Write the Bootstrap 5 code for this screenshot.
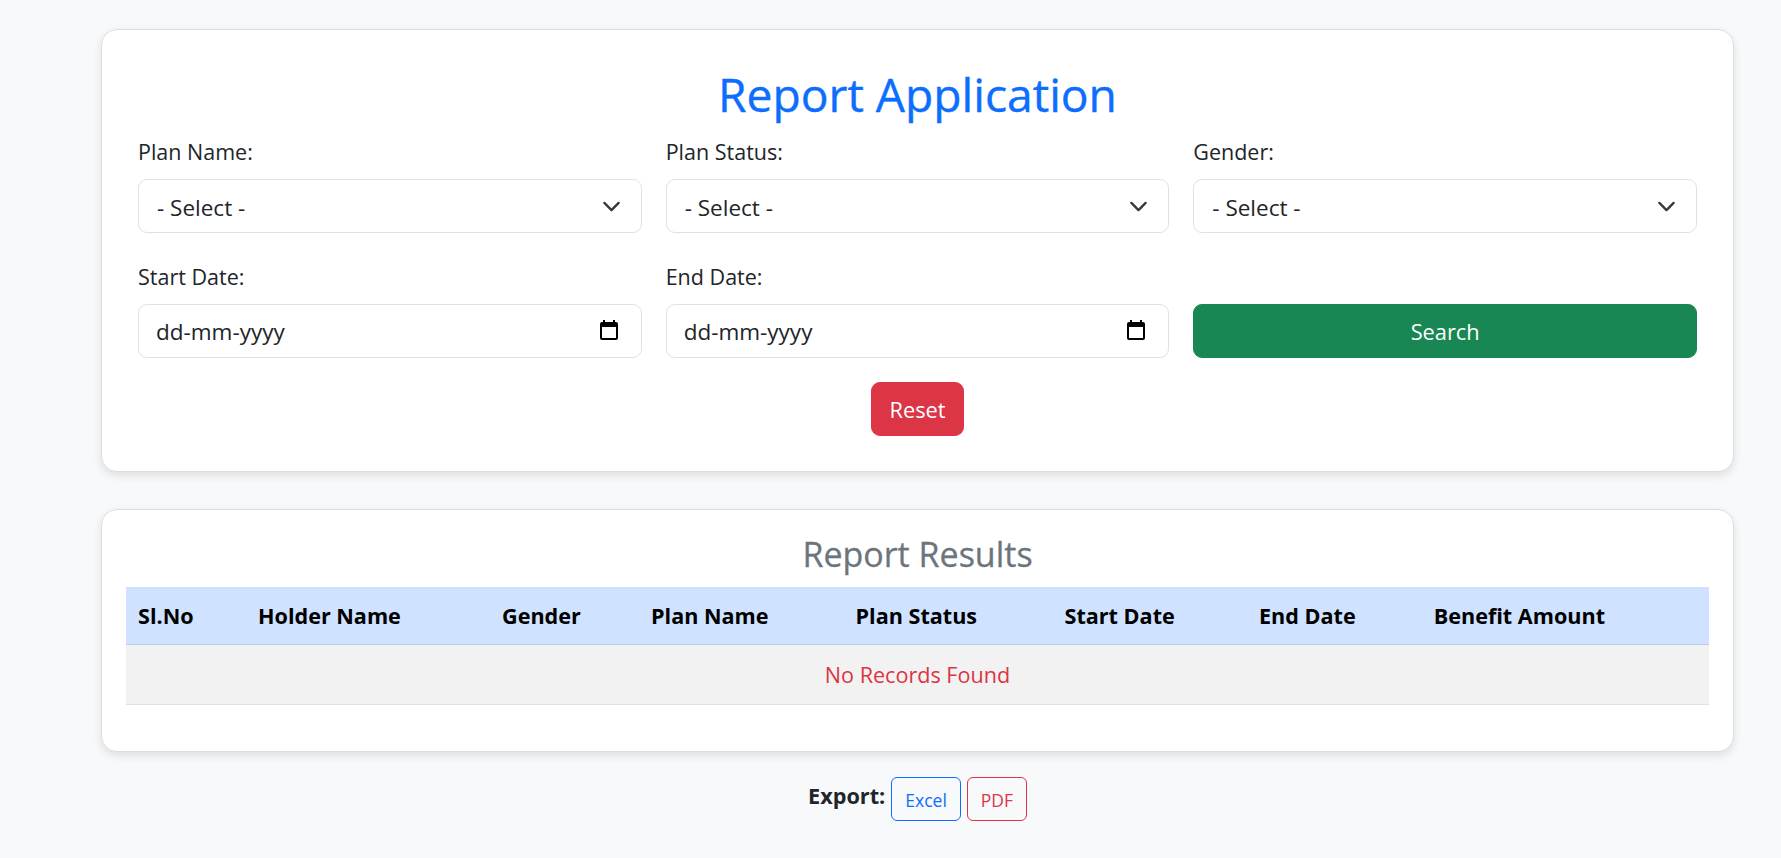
<!DOCTYPE html>
<html lang="en">
<head>
  <meta charset="UTF-8">
  <meta name="viewport" content="width=device-width, initial-scale=1.0">
  <title>Report Application</title>
  <link href="https://cdn.jsdelivr.net/npm/bootstrap@5.3.0/dist/css/bootstrap.min.css" rel="stylesheet">
  <style>
    body { background-color: #f8f9fa; font-family: "Open Sans", "Noto Sans", sans-serif; color: #212529; }
    .page-wrap { padding: 29px 47px 0 101px; }
    .panel { background: #fff; border: 1px solid #dcdee0; border-radius: 16px; box-shadow: 0 4px 10px rgba(0,0,0,.1); }
    .panel-form { padding: 35px 36px 30px 36px; height: 443px; }
    .panel-results { padding: 21px 24px 0; height: 243px; margin-top: 37px; }
    .page-title { font-size: 46.2px; line-height: 60px; color: #0d6efd; text-align: center; margin-bottom: 12px; -webkit-text-stroke: .4px #0d6efd; }
    .sub-title { font-size: 34px; line-height: 46px; color: #6c757d; text-align: center; margin-bottom: 10px; -webkit-text-stroke: .3px #6c757d; }
    .field-label { font-size: 21.5px; line-height: 30px; margin-bottom: 12px; display: block; }
    .form-select, .form-control { height: 54px; font-size: 22.5px; border-radius: 9px; border-color: #dee2e6; color: #212529; }
    .form-select { padding-left: 18px; padding-top: 10px; background-size: 19px 19px; background-position: right 20px center; }
    .form-control { padding-left: 17px; padding-top: 7px; }
    .form-control::placeholder { color: #212529; opacity: 1; }
    .date-icon { position: absolute; top: 15px; right: 21px; width: 24px; height: 24px; }
    .form-row { --bs-gutter-x: 24px; --bs-gutter-y: 0; }
    .form-row + .form-row { margin-top: 29px; }
    .btn-tall { height: 54px; font-size: 21.8px; border-radius: 9px; padding-top: 8px; }
    .btn-reset { width: 93px; }
    .reset-line { margin-top: 24px; }
    .result-table { margin-bottom: 0; font-size: 21.6px; table-layout: fixed; }
    .result-table th { height: 57px; vertical-align: middle; background: #cfe2ff; color: #000; font-weight: 700; padding: 2px 12px 0; border-bottom-color: #b9cbe6; white-space: nowrap; }
    .result-table th:nth-child(1) { width: 120px; }
    .result-table th:nth-child(2) { width: 244px; }
    .result-table th:nth-child(3) { width: 149px; }
    .result-table th:nth-child(4) { width: 204.5px; }
    .result-table th:nth-child(5) { width: 209px; }
    .result-table th:nth-child(6) { width: 194.5px; }
    .result-table th:nth-child(7) { width: 174.7px; }
    .result-table td { height: 60px; vertical-align: middle; background: #f2f2f2; color: #dc3545; text-align: center; padding: 10px 8px 8px; }
    .export-line { margin-top: 25px; padding-left: 707px; gap: 6px; }
    .export-label { font-size: 21.7px; font-weight: 700; line-height: 44px; margin-top: -3px; }
    .btn-export { height: 44px; font-size: 17.5px; line-height: 34px; padding: 5px 13px 3px; border-radius: 6px; }
  </style>
</head>
<body>
  <div class="page-wrap">
    <!-- Search form -->
    <div class="panel panel-form">
      <h1 class="page-title">Report Application</h1>
      <div class="row form-row">
        <div class="col-4">
          <label class="field-label" for="planName">Plan Name:</label>
          <select id="planName" class="form-select"><option>- Select -</option></select>
        </div>
        <div class="col-4">
          <label class="field-label" for="planStatus">Plan Status:</label>
          <select id="planStatus" class="form-select"><option>- Select -</option></select>
        </div>
        <div class="col-4">
          <label class="field-label" for="gender">Gender:</label>
          <select id="gender" class="form-select"><option>- Select -</option></select>
        </div>
      </div>
      <div class="row form-row">
        <div class="col-4">
          <label class="field-label" for="startDate">Start Date:</label>
          <div class="position-relative">
            <input type="text" id="startDate" class="form-control" placeholder="dd-mm-yyyy">
            <svg class="date-icon" viewBox="0 0 24 24"><path d="M19 3h-1V1h-2v2H8V1H6v2H5a2 2 0 0 0-2 2v14a2 2 0 0 0 2 2h14a2 2 0 0 0 2-2V5a2 2 0 0 0-2-2zm0 16H5V8h14z"/></svg>
          </div>
        </div>
        <div class="col-4">
          <label class="field-label" for="endDate">End Date:</label>
          <div class="position-relative">
            <input type="text" id="endDate" class="form-control" placeholder="dd-mm-yyyy">
            <svg class="date-icon" viewBox="0 0 24 24"><path d="M19 3h-1V1h-2v2H8V1H6v2H5a2 2 0 0 0-2 2v14a2 2 0 0 0 2 2h14a2 2 0 0 0 2-2V5a2 2 0 0 0-2-2zm0 16H5V8h14z"/></svg>
          </div>
        </div>
        <div class="col-4 d-flex align-items-end">
          <button class="btn btn-success btn-tall w-100">Search</button>
        </div>
      </div>
      <div class="text-center reset-line">
        <button class="btn btn-danger btn-tall btn-reset">Reset</button>
      </div>
    </div>

    <!-- Results -->
    <div class="panel panel-results">
      <h3 class="sub-title">Report Results</h3>
      <table class="table result-table">
        <thead>
          <tr>
            <th>Sl.No</th>
            <th>Holder Name</th>
            <th>Gender</th>
            <th>Plan Name</th>
            <th>Plan Status</th>
            <th>Start Date</th>
            <th>End Date</th>
            <th>Benefit Amount</th>
          </tr>
        </thead>
        <tbody>
          <tr><td colspan="8">No Records Found</td></tr>
        </tbody>
      </table>
    </div>

    <div class="export-line d-flex align-items-start">
      <span class="export-label">Export:</span>
      <a href="#" class="btn btn-outline-primary btn-export">Excel</a>
      <a href="#" class="btn btn-outline-danger btn-export">PDF</a>
    </div>
  </div>
  <script src="https://cdn.jsdelivr.net/npm/bootstrap@5.3.0/dist/js/bootstrap.bundle.min.js"></script>
</body>
</html>
